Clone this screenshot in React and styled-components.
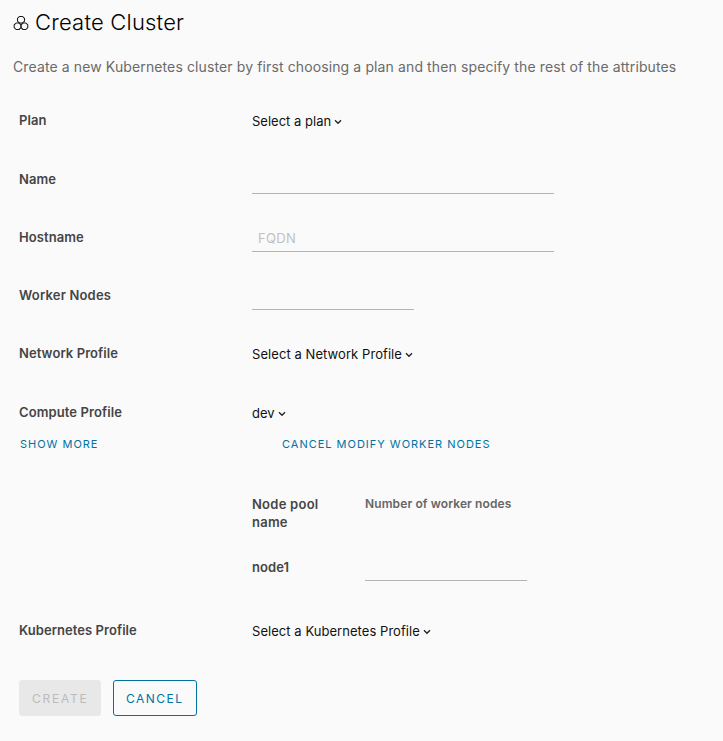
import React from "react";
import styled, { createGlobalStyle } from "styled-components";

const GlobalStyle = createGlobalStyle`
  * { box-sizing: border-box; }
  body {
    margin: 0;
    background: #fafafa;
    color: #000;
    font-family: Inter, "Open Sans", sans-serif;
    font-size: 13px;
  }
`;

const Page = styled.main`
  min-height: 741px;
  padding: 8px 13px 0;
`;

const Header = styled.header`
  display: flex;
  align-items: center;
  height: 28px;
`;

const ClusterIcon = styled.svg`
  width: 16px;
  height: 16px;
  margin: 2px 6px 0 0;
  flex: none;
`;

const Title = styled.h1`
  margin: 0;
  font-size: 22px;
  font-weight: 300;
  line-height: 28px;
  letter-spacing: 0.2px;
  white-space: nowrap;
`;

const Subtitle = styled.p`
  margin: 21px 0 0;
  color: #6a6a6a;
  font-size: 14px;
  font-weight: 400;
  line-height: 20px;
  letter-spacing: 0.117px;
  white-space: nowrap;
`;

const Form = styled.form`
  padding: 15px 6px 0;
`;

const Row = styled.div`
  display: grid;
  grid-template-columns: 233px 1fr;
  height: ${(p) => p.$height || 58}px;
  padding-top: 19px;
`;

const Label = styled.label`
  color: #454545;
  font-weight: 600;
  line-height: 18px;
  letter-spacing: ${(p) => p.$spacing ?? 0.08}px;
`;

const Select = styled.button.attrs({ type: "button" })`
  display: flex;
  align-items: center;
  align-self: start;
  justify-self: start;
  height: 20px;
  padding: 0;
  border: 0;
  background: none;
  color: #111;
  font: 400 13px/20px Inter, "Open Sans", sans-serif;
  letter-spacing: ${(p) => p.$spacing || 0}px;
`;

const Caret = styled.svg`
  width: 8px;
  height: 6px;
  margin: 1px 0 0 ${(p) => p.$gap || 3}px;
`;

const Input = styled.input`
  width: ${(p) => p.$width}px;
  height: 24px;
  margin-top: ${(p) => p.$offset || 0}px;
  padding: 0 6px 3px;
  border: 0;
  border-bottom: 1px solid #b3b3b3;
  border-radius: 0;
  outline: 0;
  background: transparent;
  color: #000;
  font: 400 13px/20px Inter, "Open Sans", sans-serif;

  &::placeholder {
    color: #c1c1c1;
    opacity: 1;
    letter-spacing: 0.35px;
  }
`;

const LinkRow = styled.div`
  display: grid;
  grid-template-columns: 262px 1fr;
  height: 53px;
  padding: 1px 0 0 1px;
`;

const LinkButton = styled.button.attrs({ type: "button" })`
  align-self: start;
  justify-self: start;
  height: 20px;
  padding: 0;
  border: 0;
  background: none;
  color: #0072a3;
  font: 400 11px/20px Inter, "Open Sans", sans-serif;
  letter-spacing: ${(p) => p.$spacing}px;
  white-space: nowrap;
`;

const NodePools = styled.section`
  display: grid;
  grid-template-columns: 90px 1fr;
  grid-template-rows: 56px 40px;
  column-gap: 23px;
  height: 116px;
  margin-left: 233px;
  padding-top: 9px;
`;

const ColumnTitle = styled.span`
  color: #666;
  font-size: 12px;
  font-weight: 600;
  line-height: 18px;
  letter-spacing: 0.11px;
`;

const NodeName = styled(Label)`
  padding-top: 7px;
`;

const Actions = styled.footer`
  display: flex;
  gap: 12px;
  padding-top: 20px;
`;

const Button = styled.button.attrs({ type: "button" })`
  width: ${(p) => p.$width}px;
  height: 36px;
  padding: 1px 0 0 12px;
  border: 1px solid #0072a3;
  border-radius: 3px;
  background: transparent;
  color: #0072a3;
  font: 400 12px/34px Inter, "Open Sans", sans-serif;
  letter-spacing: ${(p) => p.$spacing}px;
  text-align: left;

  &:disabled {
    border-color: #e8e8e8;
    background: #e8e8e8;
    color: #bcbcbc;
  }
`;

function Dropdown({ children, spacing, gap }) {
  return (
    <Select $spacing={spacing}>
      {children}
      <Caret $gap={gap} viewBox="0 0 8 6" fill="none" aria-hidden="true">
        <path d="M1 1.3 4 4.2 7 1.3" stroke="#222" strokeWidth="1.35" />
      </Caret>
    </Select>
  );
}

export default function App() {
  return (
    <Page>
      <GlobalStyle />
      <Header>
        <ClusterIcon viewBox="0 0 16 16" fill="none" stroke="#1a1a1a" strokeWidth="1.05" strokeLinejoin="round" aria-hidden="true">
          <path d="M6.4 1.5h3.2l1.9 1.9v2.7L9.6 8H6.4L4.5 6.1V3.4z" />
          <path d="M3.1 8h2.9L8 9.9v2.7l-2 1.9H3.1l-1.9-1.9V9.9z" />
          <path d="M10 8h2.9l1.9 1.9v2.7l-1.9 1.9H10l-2-1.9V9.9z" />
        </ClusterIcon>
        <Title>Create Cluster</Title>
      </Header>
      <Subtitle>
        Create a new Kubernetes cluster by first choosing a plan and then specify the rest of the attributes
      </Subtitle>
      <Form>
        <Row $height={59}>
          <Label>Plan</Label>
          <Dropdown spacing={0.01} gap={2.5}>Select a plan</Dropdown>
        </Row>
        <Row>
          <Label>Name</Label>
          <Input $width={302} aria-label="Name" />
        </Row>
        <Row>
          <Label>Hostname</Label>
          <Input $width={302} placeholder="FQDN" aria-label="Hostname" />
        </Row>
        <Row>
          <Label $spacing={0.19}>Worker Nodes</Label>
          <Input $width={162} aria-label="Worker Nodes" />
        </Row>
        <Row $height={59}>
          <Label>Network Profile</Label>
          <Dropdown spacing={0.07}>Select a Network Profile</Dropdown>
        </Row>
        <Row $height={49}>
          <Label $spacing={0.1}>Compute Profile</Label>
          <Dropdown gap={3}>dev</Dropdown>
        </Row>
        <LinkRow>
          <LinkButton $spacing={0.98}>SHOW MORE</LinkButton>
          <LinkButton $spacing={0.99}>CANCEL MODIFY WORKER NODES</LinkButton>
        </LinkRow>
        <NodePools>
          <Label $spacing={0.25}>Node pool name</Label>
          <ColumnTitle>Number of worker nodes</ColumnTitle>
          <NodeName>node1</NodeName>
          <Input $width={162} $offset={6} aria-label="Number of worker nodes" />
        </NodePools>
        <Row>
          <Label $spacing={0.06}>Kubernetes Profile</Label>
          <Dropdown spacing={0.05}>Select a Kubernetes Profile</Dropdown>
        </Row>
        <Actions>
          <Button $width={82} $spacing={1.75} disabled>CREATE</Button>
          <Button $width={84} $spacing={1.5}>CANCEL</Button>
        </Actions>
      </Form>
    </Page>
  );
}
